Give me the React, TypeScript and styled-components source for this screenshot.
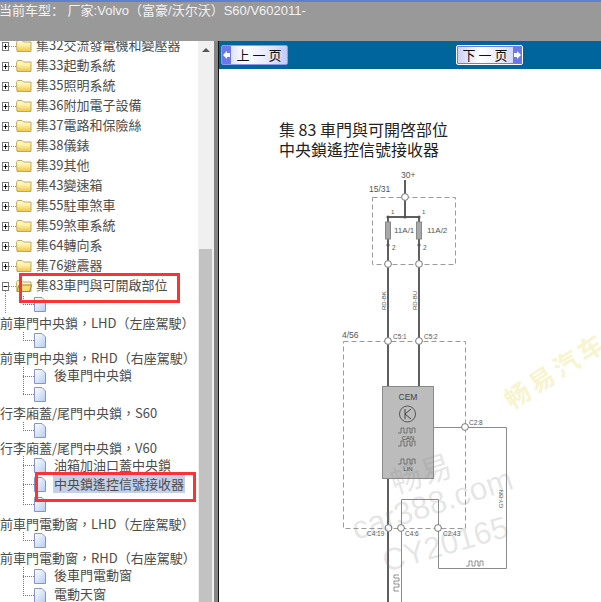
import React from "react";
import styled, { createGlobalStyle } from "styled-components";

const Global = createGlobalStyle`
  html, body { margin: 0; padding: 0; background: #fff; }
  #root { width: 601px; height: 602px; overflow: hidden; }
`;
const CJK = `"Noto Sans CJK TC", "Liberation Sans", sans-serif`;
const Page = styled.div`
  width: 601px; height: 602px; display: flex; flex-direction: column; overflow: hidden;
  font-family: ${CJK};
`;
const Header = styled.header`
  flex: 0 0 41px; box-sizing: border-box; background: #999; border-top: 2px solid #5f80cf;
  color: #f2f2f2; font: 13px/16px "Liberation Sans", "Noto Sans CJK SC", sans-serif; white-space: pre;
  padding-top: 1px; margin-left: -1px;
`;
const Body = styled.div`flex: 1; display: flex; min-height: 0;`;
const TreePanel = styled.nav`
  position: relative; flex: 0 0 198px; overflow: hidden; background: #fff;
`;
const TreeList = styled.div`display: flex; flex-direction: column; margin-top: -5px;`;
const Row = styled.div<{ $h: number }>`
  display: flex; align-items: center; height: ${p => p.$h}px; flex: 0 0 auto;
  white-space: nowrap; font-size: 13px; color: #4c4c4c;
`;
const Label = styled.span<{ $gap?: number; $on?: boolean }>`
  margin-left: ${p => p.$gap ?? 0}px; margin-bottom: 3px; padding: 0 1px; line-height: 19px;
  background: ${p => (p.$on ? "#c4d0e8" : "transparent")};
`;
const Flat = styled.span`line-height: 18px; margin-left: 0;`;
const Scrollbar = styled.div`
  flex: 0 0 16px; background: #f0f0f0; display: flex; flex-direction: column; align-items: center;
  padding-top: 7px; box-sizing: border-box;
`;
const UpArrow = styled.span`
  width: 0; height: 0; border-left: 4px solid transparent; border-right: 4px solid transparent;
  border-bottom: 4px solid #555;
`;
const Thumb = styled.div`width: 13px; margin-top: 197px; flex: 1; background: #c2c2c2; margin-right: 1px;`;
const Divider = styled.div`flex: 0 0 4px; background: #858585;`;
const DividerDark = styled.div`flex: 0 0 1px; background: #111;`;
const Viewer = styled.main`flex: 1; display: flex; flex-direction: column; min-width: 0; background: #fff;`;
const NavBar = styled.div`
  flex: 0 0 28px; background: #00659c; display: flex; align-items: center; position: relative;
  padding-left: 2px; gap: 168px;
`;
const PageButton = styled.div<{ $next?: boolean }>`
  box-sizing: border-box; width: 67px; height: 20px; display: flex; align-items: stretch;
  flex-direction: ${p => (p.$next ? "row-reverse" : "row")};
  border: 1px solid ${p => (p.$next ? "#fff" : "#8d9ae6")};
  outline: ${p => (p.$next ? "1px solid #6f7fd8" : "none")}; outline-offset: -2px;
  border-radius: 2px; overflow: hidden;
  background: linear-gradient(90deg, #c9cffa 0%, #fff 35%, #e6e9fd 70%, #c3cbf7 100%);
`;
const ButtonCap = styled.span`
  flex: 0 0 9px; background: #6a78ea; display: flex; align-items: center; justify-content: center;
`;
const ButtonText = styled.span`
  flex: 1; text-align: center; font-size: 13px; line-height: 18px; color: #111; white-space: pre;
`;
const Sheet = styled.svg`flex: 1; display: block; width: 382px; height: 533px;`;
const Callout = styled.div<{ $x: number; $y: number; $w: number; $h: number }>`
  position: absolute; box-sizing: border-box; left: ${p => p.$x}px; top: ${p => p.$y}px;
  width: ${p => p.$w}px; height: ${p => p.$h}px; border: 3px solid #fb3237; pointer-events: none;
`;

const Expander = ({ open }: { open?: boolean }) => (
  <svg width="16" height="20" viewBox="0 0 16 20" style={{ flex: "0 0 16px" }}>
    <line x1="9" x2="16" y1="10.5" y2="10.5" stroke="#888" strokeDasharray="1 1" />
    <rect x="2.5" y="6.5" width="6" height="8" fill="#fff" stroke="#777" />
    <line x1="3.5" x2="7.5" y1="10.5" y2="10.5" stroke="#111" />
    {!open && <line x1="5.5" x2="5.5" y1="8" y2="13" stroke="#111" />}
    {open && <line x1="5.5" x2="5.5" y1="15" y2="20" stroke="#888" strokeDasharray="1 1" />}
  </svg>
);
const Folder = ({ open }: { open?: boolean }) => (
  <svg width="16" height="14" viewBox="0 0 16 14" style={{ flex: "0 0 16px" }}>
    <defs>
      <linearGradient id="fg" x1="0" y1="0" x2="0" y2="1">
        <stop offset="0" stopColor="#fffbe0" />
        <stop offset=".45" stopColor="#fdeea0" />
        <stop offset="1" stopColor="#efc446" />
      </linearGradient>
    </defs>
    <path d="M.5 3.5 L1.5 1.5 H6 L7.5 3 H15 V12.5 H1 Z" fill="url(#fg)" stroke="#c2a95a" />
    {open && <path d="M3 6 H15.5 L13.5 12.5 H1 Z" fill="#f8dc77" stroke="#a08a3a" />}
  </svg>
);
const Sheetlet = () => (
  <svg width="12" height="15" viewBox="0 0 12 15" style={{ flex: "0 0 12px" }}>
    <defs>
      <linearGradient id="pg" x1="0" y1="0" x2="1" y2="1">
        <stop offset="0" stopColor="#fff" />
        <stop offset="1" stopColor="#b4cdf3" />
      </linearGradient>
    </defs>
    <path d="M.5 .5 H8 L11.5 4 V14.5 H.5 Z" fill="url(#pg)" stroke="#8a94c4" />
  </svg>
);
const Elbow = ({ h, cont, outer }: { h: number; cont?: boolean; outer?: boolean }) => (
  <svg width="34" height={h} viewBox={`0 0 34 ${h}`} style={{ flex: "0 0 34px" }}>
    {outer && <line x1="5.5" x2="5.5" y1="0" y2={h} stroke="#888" strokeDasharray="1 1" />}
    <line x1="23.5" x2="23.5" y1="0" y2={cont ? h : h / 2} stroke="#777" strokeDasharray="1 1" />
    <line x1="23" x2="34" y1={Math.floor(h / 2) + 0.5} y2={Math.floor(h / 2) + 0.5} stroke="#777" strokeDasharray="1 1" />
  </svg>
);

const groups = [
  "集32交流發電機和變壓器", "集33起動系統", "集35照明系統", "集36附加電子設備", "集37電路和保險絲",
  "集38儀錶", "集39其他", "集43變速箱", "集55駐車煞車", "集59煞車系統", "集64轉向系", "集76避震器",
];
type Item =
  | { t: "text"; h: number; label: string }
  | { t: "leaf"; h: number; label?: string; cont?: boolean; on?: boolean; outer?: boolean };
const items: Item[] = [
  { t: "leaf", h: 17, outer: true },
  { t: "text", h: 19, label: "前車門中央鎖，LHD（左座駕駛）" },
  { t: "leaf", h: 17 },
  { t: "text", h: 18, label: "前車門中央鎖，RHD（右座駕駛）" },
  { t: "leaf", h: 18, label: "後車門中央鎖", cont: true },
  { t: "leaf", h: 19 },
  { t: "text", h: 18, label: "行李廂蓋/尾門中央鎖，S60" },
  { t: "leaf", h: 17 },
  { t: "text", h: 17, label: "行李廂蓋/尾門中央鎖，V60" },
  { t: "leaf", h: 19, label: "油箱加油口蓋中央鎖", cont: true },
  { t: "leaf", h: 19, label: "中央鎖遙控信號接收器", cont: true, on: true },
  { t: "leaf", h: 21 },
  { t: "text", h: 17, label: "前車門電動窗，LHD（左座駕駛）" },
  { t: "leaf", h: 17 },
  { t: "text", h: 18, label: "前車門電動窗，RHD（右座駕駛）" },
  { t: "leaf", h: 18, label: "後車門電動窗", cont: true },
  { t: "leaf", h: 20, label: "電動天窗", cont: true },
];

const pulse = (x: number, y: number) =>
  `M${x} ${y} h3 v-5 h3 v5 h3 v-5 h3 v5 h2 v-5 h3 v5`;

const Schematic = () => {
  const thin = { stroke: "#8a8a8a", strokeWidth: 1, fill: "none" };
  const thick = { stroke: "#5f5f5f", strokeWidth: 2, fill: "none" };
  const dash = { stroke: "#9a9a9a", strokeWidth: 1, fill: "none", strokeDasharray: "5 3" };
  const dot = { r: 3.4, fill: "#fff", stroke: "#777", strokeWidth: 1 };
  const sans = `"Liberation Sans", sans-serif`;
  return (
    <Sheet viewBox="219 69 382 533">
      <text x="279" y="136" fontSize="16" fill="#222" fontFamily={CJK}>集 83 車門與可開啓部位</text>
      <text x="279" y="156" fontSize="16" fill="#222" fontFamily={CJK}>中央鎖遙控信號接收器</text>

      <g fontFamily={sans} fill="#555">
        <text x="401" y="178" fontSize="8.5">30+</text>
        <text x="369" y="192" fontSize="8.5">15/31</text>
        <text x="342" y="338" fontSize="8.5">4/56</text>
        <text x="391" y="214" fontSize="6">1</text>
        <text x="422" y="214" fontSize="6">1</text>
        <text x="392" y="250" fontSize="6.5">2</text>
        <text x="423" y="250" fontSize="6.5">2</text>
        <text x="394" y="233" fontSize="8">11A/1</text>
        <text x="427" y="233" fontSize="8">11A/2</text>
        <text x="393" y="339" fontSize="6.5">C5:1</text>
        <text x="424" y="339" fontSize="6.5">C5:2</text>
        <text x="469" y="425" fontSize="6.5">C2:8</text>
        <text x="367" y="536" fontSize="6.5">C4:19</text>
        <text x="405" y="536" fontSize="6.5">C4:6</text>
        <text x="443" y="536" fontSize="6.5">C2:43</text>
        <text transform="translate(386 310) rotate(-90)" fontSize="6">RD-BK</text>
        <text transform="translate(417 310) rotate(-90)" fontSize="6">RD-BU</text>
        <text transform="translate(503 508) rotate(-90)" fontSize="6">GY-BN</text>
      </g>

      <rect x="372.5" y="197.5" width="83" height="67" {...dash} />
      <rect x="343.5" y="341.5" width="122" height="187" {...dash} />

      <path d="M405 180 V217 M388 217 H419 M388 217 V386 M419 217 V386 M388 478 V602" {...thick} />
      <rect x="385.5" y="222" width="5" height="17" fill="#a8a8a8" stroke="#888" />
      <rect x="416.5" y="222" width="5" height="17" fill="#a8a8a8" stroke="#888" />
      {[[388, 217], [405, 217], [419, 217], [388, 245], [419, 245]].map(([cx, cy]) => (
        <circle key={`n${cx}-${cy}`} cx={cx} cy={cy} r="1.6" fill="#555" />
      ))}
      <path d="M433 427.5 H506.5 V568.5 H438.5 V499.5 H401.5 V602" {...thin} />

      <rect x="382.5" y="386.5" width="51" height="92" fill="#bcbcbc" stroke="#8a8a8a" />
      <text x="408" y="400" textAnchor="middle" fontSize="8.5" fill="#444" fontFamily={sans}>CEM</text>
      <circle cx="407.5" cy="414" r="8" fill="none" stroke="#555" />
      <path d="M405 409 V419 M405 414 L411 409 M405 414 L411 419" fill="none" stroke="#444" />
      <path d={pulse(398, 433)} fill="none" stroke="#555" strokeWidth=".7" />
      <path d={pulse(398, 446)} fill="none" stroke="#555" strokeWidth=".7" />
      <path d={pulse(398, 464)} fill="none" stroke="#555" strokeWidth=".7" />
      <text x="408" y="439.5" textAnchor="middle" fontSize="6" fill="#444" fontFamily={sans}>CAN</text>
      <text x="408" y="470.5" textAnchor="middle" fontSize="6" fill="#444" fontFamily={sans}>LIN</text>
      <path d={pulse(466, 566)} fill="none" stroke="#666" strokeWidth=".7" />
      <path d="M399 575 h-5 v3 h5 v3 h-5 v3 h5 v3 h-5 v4 h5" fill="none" stroke="#666" strokeWidth=".7" />

      {[[405, 197], [388, 264], [419, 264], [388, 341], [419, 341], [465, 427], [388.5, 528], [401, 528], [438, 528]].map(([cx, cy]) => (
        <circle key={`${cx}-${cy}`} cx={cx} cy={cy} {...dot} />
      ))}

      <text transform="translate(512 410) rotate(-33)" fontSize="25" fontWeight="700" letterSpacing="4" fill="#f7f4cf" fontFamily={CJK}>畅易汽车</text>
      <g fill="#8c8c8c" fillOpacity=".22">
        <text transform="translate(395 494) rotate(-18)" fontSize="31" fontFamily={CJK}>畅易</text>
        <text transform="translate(356 540) rotate(-18)" fontSize="32" fontFamily={sans}>car388.com</text>
        <text transform="translate(386 572) rotate(-16)" fontSize="31" fontFamily={sans}>CY20165</text>
      </g>
    </Sheet>
  );
};

export default function App() {
  return (
    <Page>
      <Global />
      <Header>{"当前车型： 厂家:Volvo（富豪/沃尔沃）S60/V602011-"}</Header>
      <Body>
        <TreePanel>
          <TreeList>
            {groups.map(g => (
              <Row key={g} $h={20}>
                <Expander />
                <Folder />
                <Label $gap={3}>{g}</Label>
              </Row>
            ))}
            <Row $h={20}>
              <Expander open />
              <Folder open />
              <Label $gap={3}>集83車門與可開啟部位</Label>
            </Row>
            {items.map((it, i) =>
              it.t === "text" ? (
                <Row key={i} $h={it.h}><Flat>{it.label}</Flat></Row>
              ) : (
                <Row key={i} $h={it.h}>
                  <Elbow h={it.h} cont={it.cont && i < items.length - 1 && !!items[i + 1] && items[i + 1].t === "leaf"} outer={it.outer} />
                  <Sheetlet />
                  {it.label && <Label $gap={7} $on={it.on}>{it.label}</Label>}
                </Row>
              )
            )}
          </TreeList>
          <Callout $x={19} $y={232} $w={161} $h={30} />
          <Callout $x={35} $y={431} $w={161} $h={30} />
        </TreePanel>
        <Scrollbar>
          <UpArrow />
          <Thumb />
        </Scrollbar>
        <Divider />
        <DividerDark />
        <Viewer>
          <NavBar>
            <PageButton>
              <ButtonCap>
                <svg width="7" height="8" viewBox="0 0 7 8"><path d="M0 4 L4 0 V2 H7 V6 H4 V8 Z" fill="#fff" /></svg>
              </ButtonCap>
              <ButtonText>{"上 一 页"}</ButtonText>
            </PageButton>
            <PageButton $next>
              <ButtonCap>
                <svg width="7" height="8" viewBox="0 0 7 8"><path d="M7 4 L3 0 V2 H0 V6 H3 V8 Z" fill="#fff" /></svg>
              </ButtonCap>
              <ButtonText>{"下 一 页"}</ButtonText>
            </PageButton>
          </NavBar>
          <Schematic />
        </Viewer>
      </Body>
    </Page>
  );
}
